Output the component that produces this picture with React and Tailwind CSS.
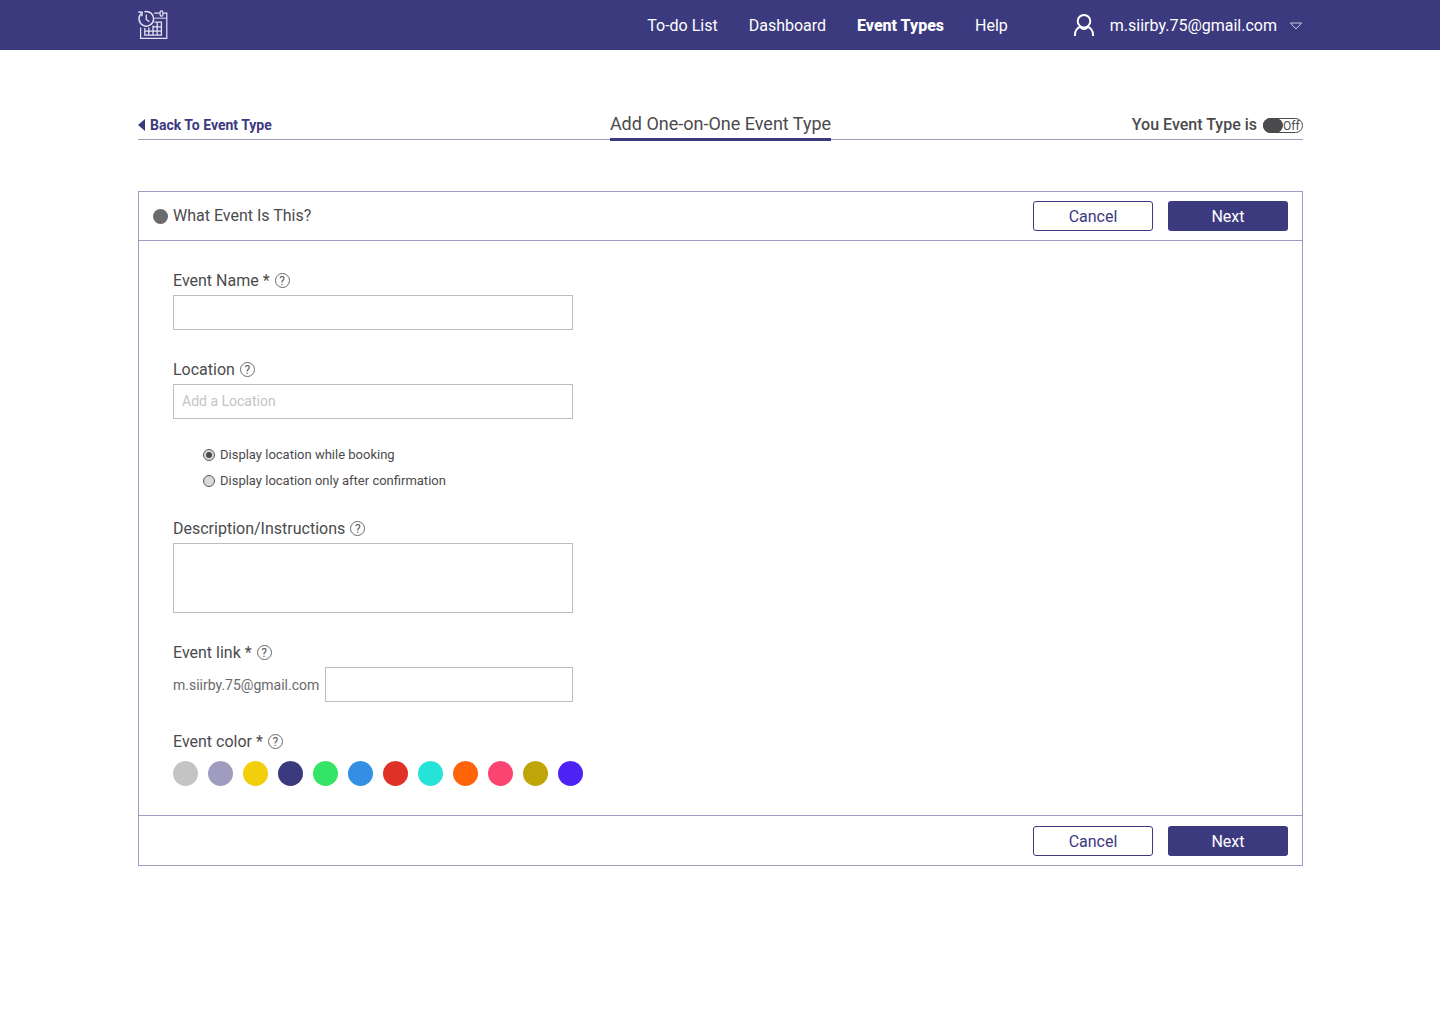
import React from "react";

const NAV_LINKS = [
  { label: "To-do List" },
  { label: "Dashboard" },
  { label: "Event Types", active: true },
  { label: "Help" },
];

const COLORS = [
  { name: "Gray", className: "bg-[#c4c4c4]" },
  { name: "Lavender", className: "bg-[#9f9cc0]" },
  { name: "Yellow", className: "bg-[#f2cf0c]" },
  { name: "Navy", className: "bg-[#3c3a7e]" },
  { name: "Green", className: "bg-[#34e465]" },
  { name: "Blue", className: "bg-[#338fe3]" },
  { name: "Red", className: "bg-[#e03127]" },
  { name: "Turquoise", className: "bg-[#26e3d7]" },
  { name: "Orange", className: "bg-[#ff640a]" },
  { name: "Pink", className: "bg-[#fb4470]" },
  { name: "Olive", className: "bg-[#c0a509]" },
  { name: "Violet", className: "bg-[#4d22f4]" },
];

function LogoIcon() {
  return (
    <svg width="30" height="30" viewBox="0 0 30 30" fill="none" stroke="#e4e3f2" strokeWidth="1.2" aria-hidden="true">
      <path d="M2.6 17.4v11h26.2V3.2h-3.6M21.8 3.2h-5.6" />
      <rect x="22.1" y="0.9" width="2.8" height="5.2" rx="1.3" />
      <path d="M16.6 8.2h12.2" opacity="0.8" />
      <path d="M6.8 18v7.2h16.6V12.2h-7M6.8 21.2h16.6M15 16.8h8.4M10.8 17.6v7.6M15 15.4v9.8M19.2 12.2v13" strokeWidth="1.3" />
      <path d="M3.3 3.5A7.3 7.3 0 1 0 6.4 1.75" strokeWidth="1.5" />
      <path d="M0.3 2l3.8 0.2-0.2 4" strokeWidth="1.4" />
      <path d="M8.3 4.4v5l3 2.4" strokeWidth="1.3" />
    </svg>
  );
}

function UserIcon() {
  return (
    <svg width="22" height="24" viewBox="0 0 22 24" fill="none" stroke="#fff" strokeWidth="2" aria-hidden="true">
      <circle cx="11" cy="8.2" r="6.3" />
      <path d="M2 23v-1.4c0-3.8 2.4-6.6 5.6-8.2M20 23v-1.4c0-3.8-2.4-6.6-5.6-8.2M7.2 13.4c1.6 3.6 6 3.6 7.6 0" />
    </svg>
  );
}

function HelpButton({ topic }) {
  return (
    <button
      type="button"
      aria-label={`Help: ${topic}`}
      className="mt-0.5 flex size-[15px] items-center justify-center rounded-full border border-[#6b6a6c] pt-px text-xs leading-none text-[#5a5a5c]"
    >
      ?
    </button>
  );
}

function FieldLabel({ htmlFor, id, children, topic }) {
  return (
    <div className="flex h-5 items-start gap-[5px] leading-5">
      {htmlFor ? <label htmlFor={htmlFor}>{children}</label> : <span id={id}>{children}</span>}
      <HelpButton topic={topic} />
    </div>
  );
}

function Actions() {
  return (
    <div className="flex gap-[15px]">
      <button type="button" className="h-[30px] w-[120px] rounded-[3px] border border-[#3c3a7e] bg-white pt-0.5 text-[#3c3a7e]">
        Cancel
      </button>
      <button type="button" className="h-[30px] w-[120px] rounded-[3px] bg-[#3c3a7e] pt-0.5 text-white">
        Next
      </button>
    </div>
  );
}

const FIELD = "block border border-[#bdbdbf] bg-white px-2 pb-0.5 text-sm outline-none placeholder:text-[#c4c4c4]";

const RADIO =
  "flex size-3 appearance-none items-center justify-center rounded-full border border-[#5a5a5c] bg-[#d9d9d9] checked:before:size-1.5 checked:before:rounded-full checked:before:bg-[#4b4b4d] checked:before:content-['']";

export default function App() {
  return (
    <div className="min-h-screen bg-white font-['Roboto',sans-serif] text-base text-[#4b4b4d]">
      <header className="flex h-[50px] items-center justify-between bg-[#3c3a7e] pr-[137px] pl-[138px] text-white">
        <a href="#home" aria-label="Home">
          <LogoIcon />
        </a>
        <div className="flex items-center">
          <nav className="flex gap-[31px] pt-0.5">
            {NAV_LINKS.map(({ label, active }) => (
              <a key={label} href="#nav" className={active ? "font-extrabold" : ""}>
                {label}
              </a>
            ))}
          </nav>
          <button type="button" className="ml-[65px] flex items-center">
            <UserIcon />
            <span className="ml-[15px] pt-0.5">m.siirby.75@gmail.com</span>
            <svg className="mt-0.5 ml-3" width="14" height="8" viewBox="0 0 14 8" fill="none" stroke="#c9c8e0" aria-hidden="true">
              <path d="M1.4 1h11.2L7 7z" />
            </svg>
          </button>
        </div>
      </header>

      <main className="pt-[60px] pr-[137px] pl-[138px]">
        <div className="grid h-[30px] grid-cols-[1fr_auto_1fr] border-b border-[#9f9cc0]">
          <a href="#back" className="flex items-center gap-[5px] pb-0.5 text-sm font-bold text-[#3c3a7e]">
            <svg width="7" height="12" viewBox="0 0 7 12" fill="currentColor" aria-hidden="true">
              <path d="M7 0v12L0 6z" />
            </svg>
            Back To Event Type
          </a>
          <h1 className="h-[31px] border-b-3 border-[#3c3a7e] text-lg leading-[28px]">Add One-on-One Event Type</h1>
          <label className="flex items-center justify-end gap-1.5 pb-0.5 font-medium">
            You Event Type is
            <span className="grid h-[15px] w-10 items-center">
              <input
                type="checkbox"
                role="switch"
                className="col-start-1 row-start-1 flex h-[15px] w-10 appearance-none rounded-full border border-[#4b4b4d] before:-m-px before:w-5 before:rounded-full before:bg-[#4b4b4d] before:content-['']"
              />
              <span className="col-start-1 row-start-1 pt-0.5 pl-5 text-xs leading-[15px] font-normal">Off</span>
            </span>
          </label>
        </div>

        <form className="mt-[51px] border border-[#9f9cc0]">
          <div className="flex h-[49px] items-center justify-between border-b border-[#9f9cc0] px-3.5">
            <h2 className="flex items-center gap-[5px]">
              <span className="size-[15px] rounded-full bg-[#6b6a6c]" />
              What Event Is This?
            </h2>
            <Actions />
          </div>

          <div className="px-[34px] pt-[30px] pb-[29px]">
            <FieldLabel htmlFor="event-name" topic="event name">Event Name *</FieldLabel>
            <input id="event-name" type="text" className={`${FIELD} mt-1 h-[35px] w-full max-w-[400px]`} />

            <div className="mt-[30px]">
              <FieldLabel htmlFor="location" topic="location">Location</FieldLabel>
              <input id="location" type="text" placeholder="Add a Location" className={`${FIELD} mt-1 h-[35px] w-full max-w-[400px]`} />
              <div className="mt-[26px] flex flex-col gap-1.5 pl-[30px] text-[13px] leading-5">
                <label className="flex items-center gap-[5px]">
                  <input type="radio" name="display" defaultChecked className={RADIO} />
                  Display location while booking
                </label>
                <label className="flex items-center gap-[5px]">
                  <input type="radio" name="display" className={RADIO} />
                  Display location only after confirmation
                </label>
              </div>
            </div>

            <div className="mt-7">
              <FieldLabel htmlFor="description" topic="description">Description/Instructions</FieldLabel>
              <textarea id="description" className={`${FIELD} mt-1 h-[70px] w-full max-w-[400px] resize-none`} />
            </div>

            <div className="mt-[30px]">
              <FieldLabel htmlFor="event-link" topic="event link">Event link *</FieldLabel>
              <div className="mt-1 flex max-w-[400px] items-center gap-1.5">
                <span className="text-sm text-[#6b6a6c]">m.siirby.75@gmail.com</span>
                <input id="event-link" type="text" className={`${FIELD} h-[35px] min-w-0 flex-1`} />
              </div>
            </div>

            <div className="mt-[30px]">
              <FieldLabel id="event-color" topic="event color">Event color *</FieldLabel>
              <div role="radiogroup" aria-labelledby="event-color" className="mt-[9px] flex flex-wrap gap-2.5">
                {COLORS.map(({ name, className }) => (
                  <input
                    key={name}
                    type="radio"
                    name="color"
                    aria-label={name}
                    className={`size-[25px] appearance-none rounded-full ${className}`}
                  />
                ))}
              </div>
            </div>
          </div>

          <div className="flex h-[50px] items-center justify-end border-t border-[#9f9cc0] px-3.5">
            <Actions />
          </div>
        </form>
      </main>
    </div>
  );
}
